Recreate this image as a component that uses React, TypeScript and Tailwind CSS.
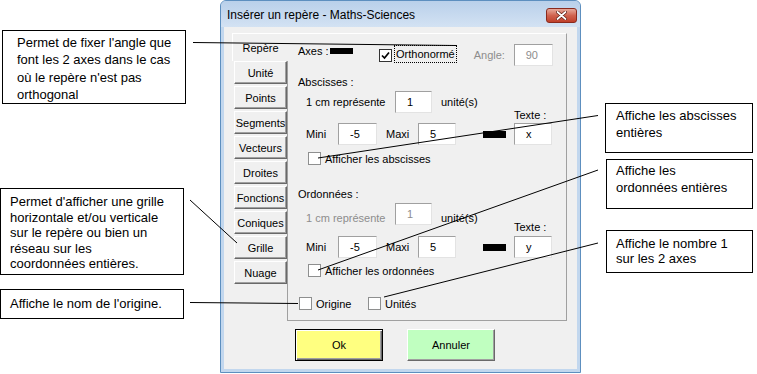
import React from 'react';

const Check: React.FC<{ checked?: boolean; className?: string }> = ({ checked, className = '' }) => (
    <span
        className={`flex h-[13px] w-[13px] shrink-0 items-center justify-center border bg-white ${checked ? 'border-[#333333]' : 'border-[#8e8f8f]'} ${className}`}
    >
        {checked && (
            <svg width="9" height="9" viewBox="0 0 9 9">
                <path d="M1 4.5 L3.5 7 L8 1.5" fill="none" stroke="#000" strokeWidth="1.7" />
            </svg>
        )}
    </span>
);

const Field: React.FC<{ value: string; disabled?: boolean; className?: string }> = ({ value, disabled, className = '' }) => (
    <div
        className={`flex h-[22px] shrink-0 items-center border border-t-[#a0a0a0] border-l-[#a0a0a0] border-r-[#e3e3e3] border-b-[#e3e3e3] bg-white pl-[11px] ${disabled ? 'text-[#8d8d8d]' : 'text-black'} ${className}`}
    >
        {value}
    </div>
);

const tabs = ['Unité', 'Points', 'Segments', 'Vecteurs', 'Droites', 'Fonctions', 'Coniques', 'Grille', 'Nuage'];

export default function App() {
    return (
        <div className="relative h-[374px] w-[757px] overflow-hidden bg-white font-['Liberation_Sans',Arial,sans-serif] text-black">
            {/* Dialog window */}
            <div className="absolute left-[220px] top-0 flex h-[373px] w-[361px] flex-col rounded-t-[6px] border border-[#5d8fbf] bg-[#c2d7ee]">
                {/* Title bar */}
                <div className="flex h-[26px] items-start justify-between rounded-t-[5px] bg-gradient-to-b from-[#b9d0ea] to-[#d3e2f3] pl-[6px]">
                    <span className="mt-[7px] text-[12px] leading-[14px]">Insérer un repère - Maths-Sciences</span>
                    <div className="mr-[3px] mt-[7px] flex h-[15px] w-[31px] items-center justify-center rounded-[3px] border border-[#8a2a1d] bg-gradient-to-b from-[#e6a99b] via-[#d0634f] to-[#bf3f2a]">
                        <svg width="11" height="9" viewBox="0 0 11 9">
                            <path d="M1.5 1 L9.5 8 M9.5 1 L1.5 8" stroke="#5a1a10" strokeWidth="3.2" strokeLinecap="round" />
                            <path d="M1.5 1 L9.5 8 M9.5 1 L1.5 8" stroke="#ffffff" strokeWidth="1.8" strokeLinecap="round" />
                        </svg>
                    </div>
                </div>

                {/* Client area */}
                <div className="mx-[3px] mb-[3px] flex-1 bg-[#f0f0f0] pl-[8px] pt-[6px] text-[11px] leading-[14px]">
                    <div className="flex h-[288px]">
                        {/* Tabs column */}
                        <div className="flex w-[56px] flex-col">
                            <div className="flex h-[28px] shrink-0 items-center justify-center border-l border-t border-white">
                                Repère
                            </div>
                            <div className="flex flex-1 flex-col gap-[2px] border-r border-[#a0a0a0] pl-[2px]">
                                {tabs.map((t) => (
                                    <div
                                        key={t}
                                        className="flex h-[23px] items-center justify-center border border-t-white border-l-white border-r-[#696969] border-b-[#696969] shadow-[inset_-1px_-1px_0_#a0a0a0]"
                                    >
                                        {t}
                                    </div>
                                ))}
                            </div>
                        </div>

                        {/* Content */}
                        <div className="flex w-[279px] flex-col border-b border-r border-t border-b-[#a0a0a0] border-r-[#a0a0a0] border-t-white pl-[10px]">
                            {/* Axes */}
                            <div className="mt-[10px] flex h-[22px] items-start">
                                <span className="w-[32px]">Axes :</span>
                                <span className="mt-[4px] h-[6px] w-[23px] bg-black" />
                                <Check checked className="ml-[26px] mt-[5px]" />
                                <span className="ml-[2px] mt-[1px] flex h-[18px] items-center border border-dotted border-black px-[1px]">
                                    Orthonormé
                                </span>
                                <span className="ml-[17px] w-[40px] leading-[22px] text-[#8d8d8d]">Angle:</span>
                                <Field value="90" disabled className="w-[39px]" />
                            </div>

                            {/* Abscisses */}
                            <div className="mt-[9px]">Abscisses :</div>
                            <div className="mt-[2px] flex h-[22px] items-center">
                                <span className="ml-[8px] w-[89px]">1 cm représente</span>
                                <Field value="1" className="w-[37px]" />
                                <span className="ml-[9px]">unité(s)</span>
                            </div>
                            <div className="-mt-[5px] ml-[216px]">Texte :</div>
                            <div className="mt-[1px] flex h-[22px] items-center">
                                <span className="ml-[8px] w-[32px]">Mini</span>
                                <Field value="-5" className="w-[39px]" />
                                <span className="ml-[9px] w-[32px]">Maxi</span>
                                <Field value="5" className="w-[38px]" />
                                <span className="ml-[27px] h-[7px] w-[23px] bg-black" />
                                <Field value="x" className="ml-[8px] w-[38px]" />
                            </div>
                            <div className="mt-[7px] flex h-[13px] items-center">
                                <Check className="ml-[10px]" />
                                <span className="ml-[4px]">Afficher les abscisses</span>
                            </div>

                            {/* Ordonnées */}
                            <div className="mt-[22px]">Ordonnées :</div>
                            <div className="mt-[2px] flex h-[22px] items-start">
                                <span className="ml-[8px] mt-[8px] w-[89px] text-[#8d8d8d]">1 cm représente</span>
                                <Field value="1" disabled className="w-[37px]" />
                                <span className="ml-[9px] mt-[8px]">unité(s)</span>
                            </div>
                            <div className="-mt-[5px] ml-[216px]">Texte :</div>
                            <div className="mt-[2px] flex h-[22px] items-center">
                                <span className="ml-[8px] w-[32px]">Mini</span>
                                <Field value="-5" className="w-[39px]" />
                                <span className="ml-[9px] w-[32px]">Maxi</span>
                                <Field value="5" className="w-[38px]" />
                                <span className="ml-[27px] h-[7px] w-[23px] bg-black" />
                                <Field value="y" className="ml-[8px] w-[38px]" />
                            </div>
                            <div className="mt-[6px] flex h-[13px] items-center">
                                <Check className="ml-[10px]" />
                                <span className="ml-[4px]">Afficher les ordonnées</span>
                            </div>

                            {/* Origine / Unités */}
                            <div className="mt-[20px] flex h-[13px] items-center">
                                <Check className="ml-[1px]" />
                                <span className="ml-[4px] w-[52px]">Origine</span>
                                <Check />
                                <span className="ml-[4px]">Unités</span>
                            </div>
                        </div>
                    </div>

                    {/* Buttons */}
                    <div className="ml-[63px] mt-[8px] flex gap-[24px]">
                        <button className="flex h-[32px] w-[88px] items-center justify-center border border-black bg-[#ffff80] shadow-[inset_1px_1px_0_#ffffff,inset_-1px_-1px_0_#696969,inset_-2px_-2px_0_#a0a0a0]">
                            Ok
                        </button>
                        <button className="flex h-[32px] w-[88px] items-center justify-center border border-t-white border-l-white border-r-[#696969] border-b-[#696969] bg-[#c0ffc0] shadow-[inset_-1px_-1px_0_#a0a0a0]">
                            Annuler
                        </button>
                    </div>
                </div>
            </div>

            {/* Callouts */}
            <div className="absolute left-[2px] top-[30px] h-[74px] w-[184px] border border-black bg-white pl-[14px] pt-[3px] text-[13px] leading-[17.3px] whitespace-nowrap">
                Permet de fixer l'angle que<br />font les 2 axes dans le cas<br />où le repère n'est pas<br />orthogonal
            </div>
            <div className="absolute left-0 top-[188px] h-[87px] w-[184px] border border-black bg-white pl-[9px] pt-[5px] text-[13px] leading-[15.5px] whitespace-nowrap">
                Permet d'afficher une grille<br />horizontale et/ou verticale<br />sur le repère ou bien un<br />réseau sur les<br />coordonnées entières.
            </div>
            <div className="absolute left-0 top-[289px] h-[30px] w-[184px] border border-black bg-white pl-[9px] pt-[6px] text-[13px] leading-[16px] whitespace-nowrap">
                Affiche le nom de l'origine.
            </div>
            <div className="absolute left-[605px] top-[103px] h-[50px] w-[148px] border border-black bg-white pl-[10px] pt-[4px] text-[13px] leading-[16.7px] whitespace-nowrap">
                Affiche les abscisses<br />entières
            </div>
            <div className="absolute left-[606px] top-[159px] h-[50px] w-[147px] border border-black bg-white pl-[9px] pt-[3px] text-[13px] leading-[16.7px] whitespace-nowrap">
                Affiche les<br />ordonnées entières
            </div>
            <div className="absolute left-[606px] top-[230px] h-[43px] w-[147px] border border-black bg-white pl-[9px] pt-[5px] text-[13px] leading-[15px] whitespace-nowrap">
                Affiche le nombre 1<br />sur les 2 axes
            </div>

            {/* Connector lines */}
            <svg className="pointer-events-none absolute left-0 top-0" width="757" height="374">
                <g stroke="#000" strokeWidth="1" fill="none">
                    <line x1="193" y1="42.5" x2="456" y2="45.5" />
                    <line x1="190" y1="200" x2="237" y2="243" />
                    <line x1="190" y1="302.5" x2="298" y2="303.5" />
                    <line x1="598" y1="115.5" x2="318" y2="158" />
                    <line x1="598" y1="170" x2="318" y2="270" />
                    <line x1="598" y1="243" x2="384" y2="297" />
                </g>
            </svg>
        </div>
    );
}
